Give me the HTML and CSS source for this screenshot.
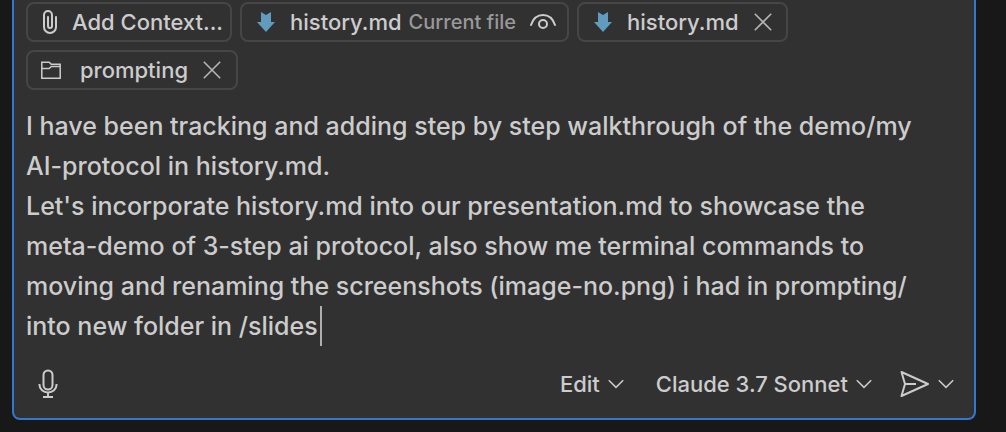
FILE: index.html
```html
<!DOCTYPE html>
<html lang="en">
<head>
<meta charset="utf-8">
<meta name="viewport" content="width=device-width, initial-scale=1">
<title>Chat input</title>
<link rel="stylesheet" href="styles.css">
</head>
<body>
<form class="panel">
  <div class="chips">
    <button type="button" class="chip chip-add">
      <svg class="clip" width="16" height="26" viewBox="0 0 16 26" fill="none" stroke="currentColor" stroke-width="2" stroke-linecap="round"><path d="M14 8v10a6 6 0 0 1-12 0V6a4 4 0 0 1 8 0v11a2 2 0 0 1-4 0V8"/></svg>
      <span>Add Context...</span>
    </button>
    <div class="chip chip-current">
      <svg class="file" width="18" height="20" viewBox="0 0 18 20" fill="currentColor"><path d="M4 0l5 3 5-3v10h4l-9 10-9-10h4z"/></svg>
      <span class="name">history.md</span>
      <span class="note">Current file</span>
      <button type="button" class="icon-button eye" aria-label="Toggle current file">
        <svg width="26" height="16" viewBox="0 0 26 16" fill="none" stroke="currentColor" stroke-width="2" stroke-linecap="round"><path d="M1 11C3 5 7.500 1 13 1s10 4 12 10"/><circle cx="13" cy="10" r="4"/></svg>
      </button>
    </div>
    <div class="chip chip-file">
      <svg class="file" width="18" height="20" viewBox="0 0 18 20" fill="currentColor"><path d="M4 0l5 3 5-3v10h4l-9 10-9-10h4z"/></svg>
      <span class="name">history.md</span>
      <button type="button" class="icon-button" aria-label="Remove history.md">
        <svg width="18" height="18" viewBox="0 0 18 18" fill="none" stroke="currentColor" stroke-width="1.600"><path d="M.8.8l16.400 16.400M17.200.8.8 17.200"/></svg>
      </button>
    </div>
    <div class="chip chip-folder">
      <svg width="20" height="18" viewBox="0 0 20 18" fill="none" stroke="currentColor" stroke-width="1.500"><path d="M.8 17.200V1.300h7.400l2 2h9v13.900zM.8 7.500h7.400l2-2h9"/></svg>
      <span class="name">prompting</span>
      <button type="button" class="icon-button" aria-label="Remove prompting">
        <svg width="18" height="18" viewBox="0 0 18 18" fill="none" stroke="currentColor" stroke-width="1.600"><path d="M.8.8l16.400 16.400M17.200.8.8 17.200"/></svg>
      </button>
    </div>
  </div>
  <div class="editor">
    <textarea class="prompt" rows="6" aria-label="Message" spellcheck="false">I have been tracking and adding step by step walkthrough of the demo/my AI-protocol in history.md.
Let's incorporate history.md into our presentation.md to showcase the meta-demo of 3-step ai protocol, also show me terminal commands to moving and renaming the screenshots (image-no.png) i had in prompting/ into new folder in /slides</textarea>
    <span class="caret"></span>
  </div>
  <div class="toolbar">
    <button type="button" class="tool mic" aria-label="Voice input">
      <svg width="20" height="30" viewBox="0 0 20 30" fill="none" stroke="currentColor" stroke-width="2"><rect x="5.500" y="1.500" width="9" height="19" rx="4.500"/><path d="M1.500 15v1a8.500 7.500 0 0 0 17 0v-1M10 23.500V28M5 28h10"/></svg>
    </button>
    <button type="button" class="tool">
      <span>Edit</span>
      <svg width="16" height="10" viewBox="0 0 16 10" fill="none" stroke="currentColor" stroke-width="1.500"><path d="M.8 1.200 8 8.400l7.200-7.200"/></svg>
    </button>
    <button type="button" class="tool model">
      <span>Claude 3.7 Sonnet</span>
      <svg width="16" height="10" viewBox="0 0 16 10" fill="none" stroke="currentColor" stroke-width="1.500"><path d="M.8 1.200 8 8.400l7.200-7.200"/></svg>
    </button>
    <button type="submit" class="tool send" aria-label="Send">
      <svg width="30" height="28" viewBox="0 0 30 28" fill="none" stroke="currentColor" stroke-width="2" stroke-linejoin="round"><path d="M1.500 2 28 14 1.500 26 5 14zM5 14h11"/></svg>
    </button>
    <button type="button" class="tool more" aria-label="Send options">
      <svg width="16" height="10" viewBox="0 0 16 10" fill="none" stroke="currentColor" stroke-width="1.500"><path d="M.8 1.200 8 8.400l7.200-7.200"/></svg>
    </button>
  </div>
</form>
</body>
</html>
```
FILE: styles.css
```css
* {
  box-sizing: border-box;
}

body {
  margin: 0;
  background: #181818;
  color: #cccccc;
  font-family: Inter, "Liberation Sans", sans-serif;
  font-weight: 500;
}

button,
textarea {
  margin: 0;
  padding: 0;
  border: 0;
  background: none;
  color: inherit;
  font: inherit;
}

svg {
  flex: none;
  display: block;
}

.panel {
  margin: 0 30px 12px 12px;
  padding: 2px 12px 12px;
  border: 2px solid #3277d0;
  border-top: 0;
  border-radius: 0 0 8px 8px;
  background: #313131;
}

.chips {
  display: flex;
  flex-wrap: wrap;
  gap: 8px;
}

.chip {
  display: flex;
  align-items: center;
  height: 40px;
  border: 2px solid #464646;
  border-radius: 8px;
  font-size: 22px;
  line-height: 28px;
  white-space: nowrap;
}

.chip-add {
  gap: 14px;
  padding: 0 7px 0 14px;
}

.chip-current,
.chip-file {
  padding: 0 11px 0 15px;
}

.chip-folder {
  padding: 0 15px 0 13px;
}

.file {
  margin-right: 15px;
  color: #619bbd;
}

.chip-folder .name {
  margin-left: 19px;
}

.note {
  margin-left: 7px;
  color: #999999;
  font-size: 20px;
}

.icon-button {
  margin-left: 15px;
  color: #b4b4b4;
}

.eye {
  margin-left: 14px;
  color: #cccccc;
}

.chip-file {
  padding-right: 14px;
}

.editor {
  position: relative;
  margin-top: 16px;
}

.prompt {
  display: block;
  width: 100%;
  padding-right: 24px;
  outline: 0;
  overflow: hidden;
  resize: none;
  font-size: 25px;
  line-height: 40px;
}

.caret {
  position: absolute;
  bottom: 0;
  left: 294px;
  width: 2px;
  height: 40px;
  background: #aeafad;
}

.toolbar {
  display: flex;
  align-items: center;
  height: 44px;
  margin-top: 16px;
  padding: 0 8px 0 12px;
}

.tool {
  display: flex;
  align-items: center;
  gap: 8px;
  font-size: 22px;
  line-height: 28px;
  white-space: nowrap;
}

.mic {
  margin-right: auto;
}

.model {
  margin-left: 32px;
}

.send {
  margin-left: 28px;
}

.more {
  margin-left: 8px;
}
```
